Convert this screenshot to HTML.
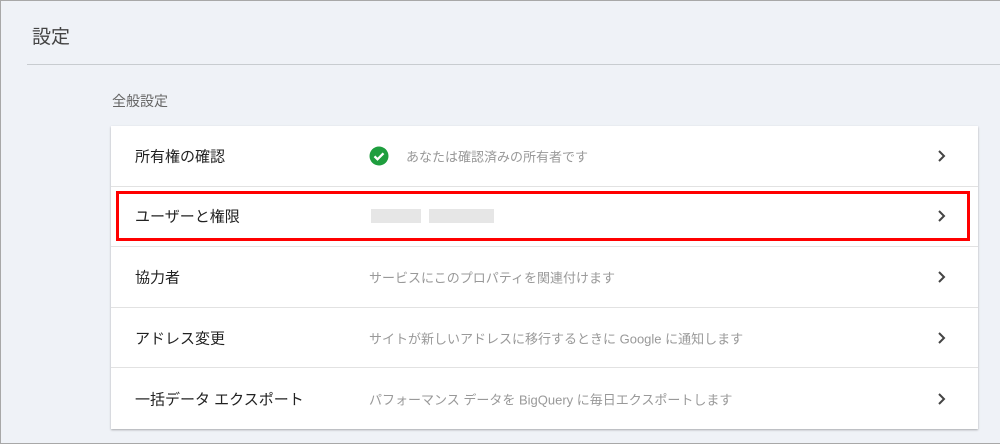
<!DOCTYPE html>
<html><head><meta charset="utf-8"><style>
*{margin:0;padding:0;box-sizing:border-box}
body{width:1000px;height:444px;overflow:hidden;background:#eff2f7;font-family:"Liberation Sans","Noto Sans CJK JP",sans-serif;position:relative}
.frame{position:absolute;left:0;top:0;width:1000px;height:444px;border:1px solid #a8a8a8;border-right:none}
.title{position:absolute;left:32px;top:22px;font-size:19px;color:#444}
.rule{position:absolute;left:27px;right:0;top:64px;height:1px;background:#c8ccd0}
.sub{position:absolute;left:112px;top:91px;font-size:14px;color:#666}
.card{position:absolute;left:111px;top:126px;width:867px;height:303px;background:#fff;box-shadow:0 1px 2px rgba(0,0,0,.3)}
.row{position:relative;height:60.6px;border-bottom:1px solid #e2e2e2}
.row:last-child{border-bottom:none}
.l{position:absolute;left:24px;top:50%;transform:translateY(-50%);font-size:15px;color:#222}
.d{position:absolute;left:258px;top:50%;transform:translateY(-50%);font-size:13px;color:#999}
.ch{position:absolute;left:826px;top:50%;transform:translateY(-50%)}
.red{position:absolute;left:116px;top:191px;width:854px;height:50px;border:3px solid #f00}
.blur{position:absolute;top:22px;height:14px;background:#e6e6e6}
</style></head><body>
<div class="frame"></div>
<div class="title">設定</div>
<div class="rule"></div>
<div class="sub">全般設定</div>
<div class="card">
<div class="row"><div class="l">所有権の確認</div>
<svg style="position:absolute;left:258px;top:20px" width="20" height="20" viewBox="0 0 20 20"><circle cx="10" cy="10" r="9.5" fill="#1e9e3e"/><path d="M5.5 10.3l3 3 6-6" stroke="#fff" stroke-width="2.3" fill="none"/></svg>
<div class="d" style="left:295px">あなたは確認済みの所有者です</div>
<svg class="ch" width="10" height="14" viewBox="0 0 10 14"><path d="M2 2l5 5-5 5" stroke="#444" stroke-width="2" fill="none"/></svg></div>
<div class="row"><div class="l">ユーザーと権限</div>
<div class="blur" style="left:260px;width:50px"></div><div class="blur" style="left:318px;width:65px"></div>
<svg class="ch" width="10" height="14" viewBox="0 0 10 14"><path d="M2 2l5 5-5 5" stroke="#444" stroke-width="2" fill="none"/></svg></div>
<div class="row"><div class="l">協力者</div><div class="d">サービスにこのプロパティを関連付けます</div>
<svg class="ch" width="10" height="14" viewBox="0 0 10 14"><path d="M2 2l5 5-5 5" stroke="#444" stroke-width="2" fill="none"/></svg></div>
<div class="row"><div class="l">アドレス変更</div><div class="d">サイトが新しいアドレスに移行するときに Google に通知します</div>
<svg class="ch" width="10" height="14" viewBox="0 0 10 14"><path d="M2 2l5 5-5 5" stroke="#444" stroke-width="2" fill="none"/></svg></div>
<div class="row"><div class="l">一括データ エクスポート</div><div class="d">パフォーマンス データを BigQuery に毎日エクスポートします</div>
<svg class="ch" width="10" height="14" viewBox="0 0 10 14"><path d="M2 2l5 5-5 5" stroke="#444" stroke-width="2" fill="none"/></svg></div>
</div>
<div class="red"></div>
</body></html>
